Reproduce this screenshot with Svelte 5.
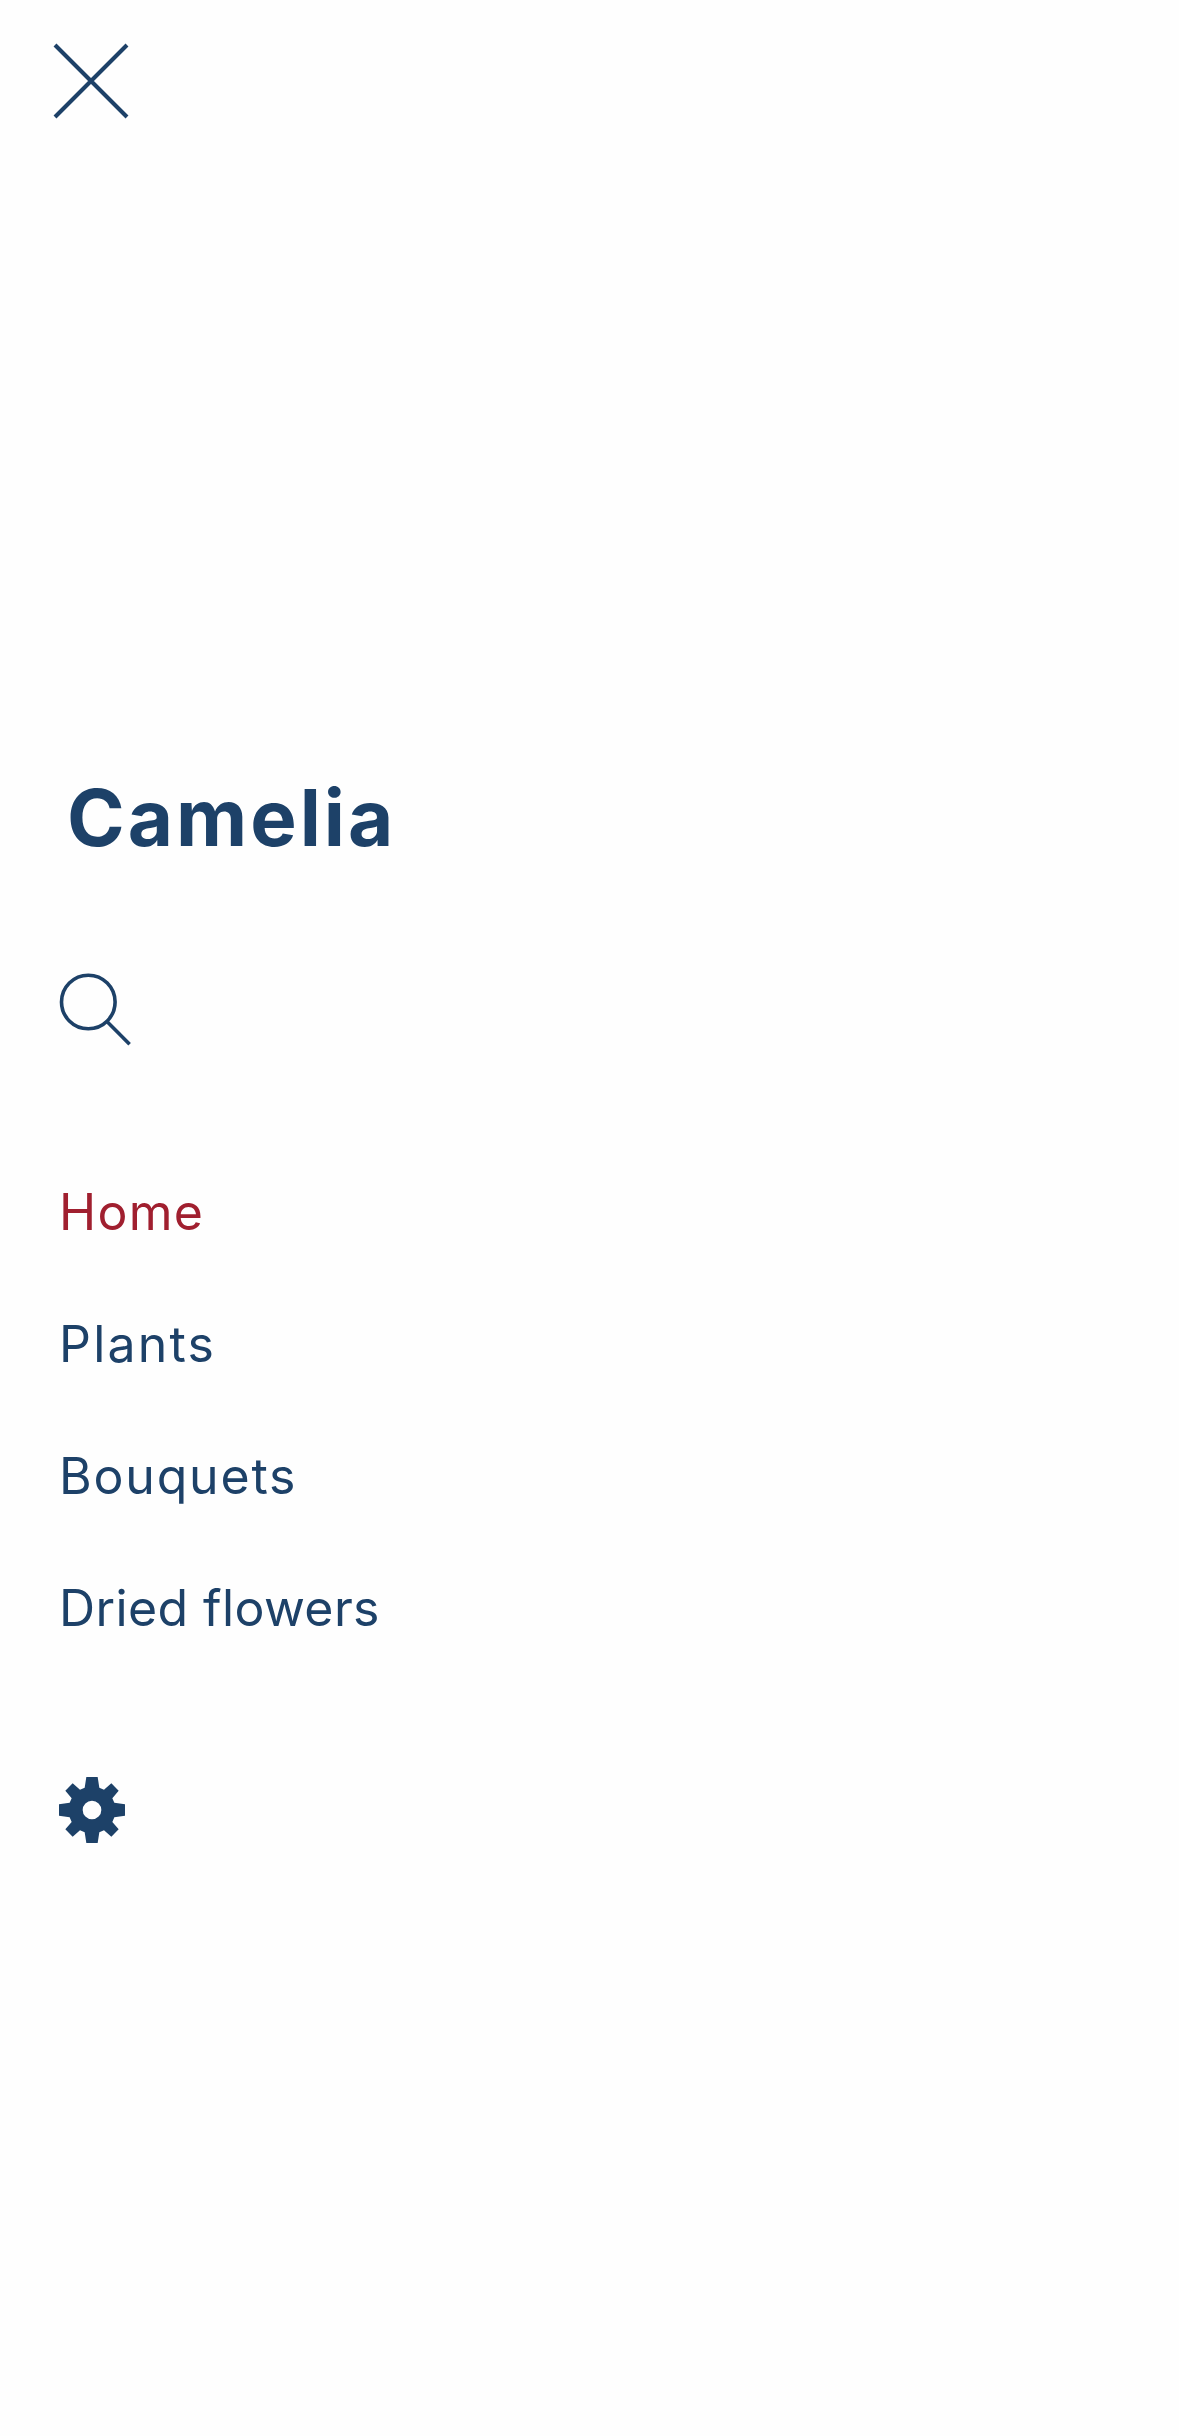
<script>
  const links = [
    { label: 'Home', slug: 'home' },
    { label: 'Plants', slug: 'plants' },
    { label: 'Bouquets', slug: 'bouquets' },
    { label: 'Dried flowers', slug: 'dried' }
  ];
  let active = $state('home');
</script>

<main class="drawer">
  <button class="icon close" aria-label="Close menu">
    <svg width="80" height="80" viewBox="0 0 80 80" fill="none" stroke="currentColor" stroke-width="4.1">
      <path d="M4 4 76 76M76 4 4 76" />
    </svg>
  </button>

  <h1>Camelia</h1>

  <button class="icon search" aria-label="Search">
    <svg width="76" height="76" viewBox="0 0 76 76" fill="none" stroke="currentColor" stroke-width="3.6">
      <circle cx="30.3" cy="30" r="26.8" />
      <path d="M48.7 49.3 71.6 72.2" />
    </svg>
  </button>

  <nav>
    {#each links as link}
      <a
        class={link.slug}
        class:active={active === link.slug}
        href={'#' + link.slug}
        onclick={() => (active = link.slug)}>{link.label}</a>
    {/each}
  </nav>

  <button class="icon settings" aria-label="Settings">
    <svg width="66" height="66" viewBox="-99 -99 198 198" fill="currentColor">
      <path
        fill-rule="evenodd"
        d="M-17-99H17L22-67 36-61 58-80 80-58 61-35 67-22 99-17V17L67 22 61 36 80 58 58 80 36 61 22 67 17 99H-17L-22 67-36 61-58 80-80 58-61 36-67 22-99 17V-17L-67-22-61-35-80-58-58-80-36-61-22-67ZM28 0A28 28 0 1 0-28 0A28 28 0 1 0 28 0Z" />
    </svg>
  </button>
</main>

<style>
  :global(body) {
    background: #fefefe;
  }
  .drawer {
    display: flex;
    flex-direction: column;
    align-items: flex-start;
    box-sizing: border-box;
    min-height: 2436px;
    padding: 41px 58px;
    font-family: Inter, sans-serif;
    color: #1d4168;
  }
  .icon {
    display: block;
    padding: 0;
    border: 0;
    background: none;
    color: inherit;
  }
  .icon svg {
    display: block;
  }
  .close {
    margin-left: -7px;
  }
  h1 {
    margin: 647px 0 0 9px;
    font-size: 78px;
    line-height: 100px;
    font-weight: 700;
    letter-spacing: 3px;
  }
  .search {
    margin-top: 104px;
  }
  nav {
    display: flex;
    flex-direction: column;
    margin: 98px 0 0 1px;
  }
  nav a {
    font-size: 50px;
    line-height: 132px;
    letter-spacing: 1.8px;
    color: inherit;
    text-decoration: none;
    white-space: nowrap;
  }
  nav a.home {
    letter-spacing: 1.3px;
  }
  nav a.plants {
    letter-spacing: 2.2px;
  }
  nav a.dried {
    letter-spacing: 0.4px;
  }
  nav a.active {
    color: #a01f2f;
  }
  .settings {
    margin: 103px 0 0 1px;
  }
</style>
